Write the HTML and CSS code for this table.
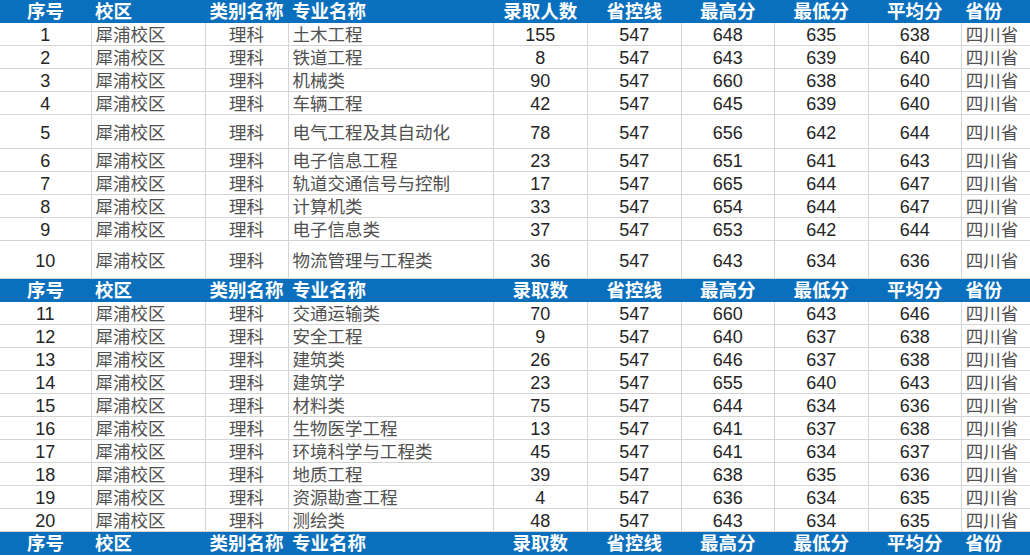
FILE: index.html
```html
<!DOCTYPE html>
<html lang="zh-CN">
<head>
<meta charset="utf-8">
<title>录取分数</title>
<link rel="stylesheet" href="styles.css">
</head>
<body>
<table class="grid">
  <colgroup>
    <col class="c-no"><col class="c-campus"><col class="c-type"><col class="c-major">
    <col class="c-num"><col class="c-num"><col class="c-num2"><col class="c-num"><col class="c-num2"><col class="c-prov">
  </colgroup>
  <tbody>
    <tr class="head"><td class="ctr">序号</td><td>校区</td><td class="ctr">类别名称</td><td>专业名称</td><td class="ctr">录取人数</td><td class="ctr">省控线</td><td class="ctr">最高分</td><td class="ctr">最低分</td><td class="ctr">平均分</td><td>省份</td></tr>
    <tr class="row"><td class="n">1</td><td class="t">犀浦校区</td><td class="t ctr">理科</td><td class="t">土木工程</td><td class="n">155</td><td class="n">547</td><td class="n">648</td><td class="n">635</td><td class="n">638</td><td class="t">四川省</td></tr>
    <tr class="row"><td class="n">2</td><td class="t">犀浦校区</td><td class="t ctr">理科</td><td class="t">铁道工程</td><td class="n">8</td><td class="n">547</td><td class="n">643</td><td class="n">639</td><td class="n">640</td><td class="t">四川省</td></tr>
    <tr class="row"><td class="n">3</td><td class="t">犀浦校区</td><td class="t ctr">理科</td><td class="t">机械类</td><td class="n">90</td><td class="n">547</td><td class="n">660</td><td class="n">638</td><td class="n">640</td><td class="t">四川省</td></tr>
    <tr class="row"><td class="n">4</td><td class="t">犀浦校区</td><td class="t ctr">理科</td><td class="t">车辆工程</td><td class="n">42</td><td class="n">547</td><td class="n">645</td><td class="n">639</td><td class="n">640</td><td class="t">四川省</td></tr>
    <tr class="row tall5"><td class="n">5</td><td class="t">犀浦校区</td><td class="t ctr">理科</td><td class="t">电气工程及其自动化</td><td class="n">78</td><td class="n">547</td><td class="n">656</td><td class="n">642</td><td class="n">644</td><td class="t">四川省</td></tr>
    <tr class="row"><td class="n">6</td><td class="t">犀浦校区</td><td class="t ctr">理科</td><td class="t">电子信息工程</td><td class="n">23</td><td class="n">547</td><td class="n">651</td><td class="n">641</td><td class="n">643</td><td class="t">四川省</td></tr>
    <tr class="row"><td class="n">7</td><td class="t">犀浦校区</td><td class="t ctr">理科</td><td class="t">轨道交通信号与控制</td><td class="n">17</td><td class="n">547</td><td class="n">665</td><td class="n">644</td><td class="n">647</td><td class="t">四川省</td></tr>
    <tr class="row"><td class="n">8</td><td class="t">犀浦校区</td><td class="t ctr">理科</td><td class="t">计算机类</td><td class="n">33</td><td class="n">547</td><td class="n">654</td><td class="n">644</td><td class="n">647</td><td class="t">四川省</td></tr>
    <tr class="row"><td class="n">9</td><td class="t">犀浦校区</td><td class="t ctr">理科</td><td class="t">电子信息类</td><td class="n">37</td><td class="n">547</td><td class="n">653</td><td class="n">642</td><td class="n">644</td><td class="t">四川省</td></tr>
    <tr class="row tall10"><td class="n">10</td><td class="t">犀浦校区</td><td class="t ctr">理科</td><td class="t">物流管理与工程类</td><td class="n">36</td><td class="n">547</td><td class="n">643</td><td class="n">634</td><td class="n">636</td><td class="t">四川省</td></tr>
    <tr class="head"><td class="ctr">序号</td><td>校区</td><td class="ctr">类别名称</td><td>专业名称</td><td class="ctr">录取数</td><td class="ctr">省控线</td><td class="ctr">最高分</td><td class="ctr">最低分</td><td class="ctr">平均分</td><td>省份</td></tr>
    <tr class="row"><td class="n">11</td><td class="t">犀浦校区</td><td class="t ctr">理科</td><td class="t">交通运输类</td><td class="n">70</td><td class="n">547</td><td class="n">660</td><td class="n">643</td><td class="n">646</td><td class="t">四川省</td></tr>
    <tr class="row"><td class="n">12</td><td class="t">犀浦校区</td><td class="t ctr">理科</td><td class="t">安全工程</td><td class="n">9</td><td class="n">547</td><td class="n">640</td><td class="n">637</td><td class="n">638</td><td class="t">四川省</td></tr>
    <tr class="row"><td class="n">13</td><td class="t">犀浦校区</td><td class="t ctr">理科</td><td class="t">建筑类</td><td class="n">26</td><td class="n">547</td><td class="n">646</td><td class="n">637</td><td class="n">638</td><td class="t">四川省</td></tr>
    <tr class="row"><td class="n">14</td><td class="t">犀浦校区</td><td class="t ctr">理科</td><td class="t">建筑学</td><td class="n">23</td><td class="n">547</td><td class="n">655</td><td class="n">640</td><td class="n">643</td><td class="t">四川省</td></tr>
    <tr class="row"><td class="n">15</td><td class="t">犀浦校区</td><td class="t ctr">理科</td><td class="t">材料类</td><td class="n">75</td><td class="n">547</td><td class="n">644</td><td class="n">634</td><td class="n">636</td><td class="t">四川省</td></tr>
    <tr class="row"><td class="n">16</td><td class="t">犀浦校区</td><td class="t ctr">理科</td><td class="t">生物医学工程</td><td class="n">13</td><td class="n">547</td><td class="n">641</td><td class="n">637</td><td class="n">638</td><td class="t">四川省</td></tr>
    <tr class="row"><td class="n">17</td><td class="t">犀浦校区</td><td class="t ctr">理科</td><td class="t">环境科学与工程类</td><td class="n">45</td><td class="n">547</td><td class="n">641</td><td class="n">634</td><td class="n">637</td><td class="t">四川省</td></tr>
    <tr class="row"><td class="n">18</td><td class="t">犀浦校区</td><td class="t ctr">理科</td><td class="t">地质工程</td><td class="n">39</td><td class="n">547</td><td class="n">638</td><td class="n">635</td><td class="n">636</td><td class="t">四川省</td></tr>
    <tr class="row"><td class="n">19</td><td class="t">犀浦校区</td><td class="t ctr">理科</td><td class="t">资源勘查工程</td><td class="n">4</td><td class="n">547</td><td class="n">636</td><td class="n">634</td><td class="n">635</td><td class="t">四川省</td></tr>
    <tr class="row"><td class="n">20</td><td class="t">犀浦校区</td><td class="t ctr">理科</td><td class="t">测绘类</td><td class="n">48</td><td class="n">547</td><td class="n">643</td><td class="n">634</td><td class="n">635</td><td class="t">四川省</td></tr>
    <tr class="head"><td class="ctr">序号</td><td>校区</td><td class="ctr">类别名称</td><td>专业名称</td><td class="ctr">录取数</td><td class="ctr">省控线</td><td class="ctr">最高分</td><td class="ctr">最低分</td><td class="ctr">平均分</td><td>省份</td></tr>
  </tbody>
</table>
</body>
</html>
```
FILE: styles.css
```css
html, body {
  margin: 0;
  padding: 0;
  background: #ffffff;
  overflow: hidden;
}

.grid {
  border-collapse: collapse;
  table-layout: fixed;
  width: 1040px;
  font-family: "Liberation Sans", "Noto Sans CJK SC", sans-serif;
  font-size: 17px;
  color: #2a2a2a;
}

.c-no { width: 91px; }
.c-campus { width: 114px; }
.c-type { width: 83px; }
.c-major { width: 205px; }
.c-num { width: 94px; }
.c-num2 { width: 93px; }
.c-prov { width: 78px; }

.grid td {
  padding: 0 4px;
  white-space: nowrap;
  overflow: hidden;
  line-height: 20px;
  vertical-align: middle;
}

.head td {
  background: #0a70be;
  color: #ffffff;
  font-weight: bold;
  font-size: 18.5px;
  height: 22px;
  padding-top: 1px;
  padding-bottom: 0;
  border: 0;
}

.row td {
  height: 20px;
  padding-top: 2px;
  border: 1px solid #d4d4d4;
  border-top: 0;
}

.row td:first-child { border-left: 0; }

.tall5 td { height: 31px; }
.tall10 td { height: 35px; }

.ctr { text-align: center; }
.n { text-align: center; color: #252525; font-size: 18px; }
.t { color: #505050; font-size: 17.5px; }
```
